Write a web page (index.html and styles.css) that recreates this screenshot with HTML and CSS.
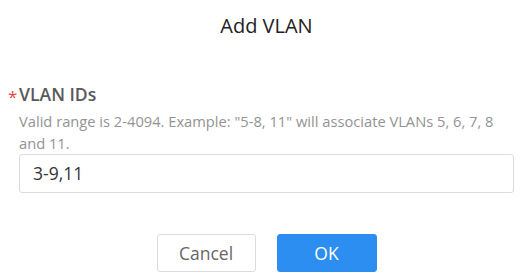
FILE: index.html
```html
<!DOCTYPE html>
<html>
<head>
<meta charset="utf-8">
<link rel="stylesheet" href="styles.css">
</head>
<body>
<div class="dialog">
  <div class="title">Add VLAN</div>
  <div class="field">
    <div class="label"><span class="req">*</span>VLAN IDs</div>
    <div class="help">Valid range is 2-4094. Example: "5-8, 11" will associate VLANs 5, 6, 7, 8 and 11.</div>
    <div class="input">3-9,11</div>
  </div>
  <div class="actions">
    <button class="btn btn-cancel">Cancel</button>
    <button class="btn btn-ok">OK</button>
  </div>
</div>
</body>
</html>
```
FILE: styles.css
```css
html, body {
  margin: 0;
  padding: 0;
  background: #fff;
}
.dialog {
  width: 522px;
  height: 276px;
  box-sizing: border-box;
  padding: 13px 8px 0 19px;
  font-family: "Open Sans", sans-serif;
}
.title {
  text-align: center;
  font-size: 20px;
  line-height: 26px;
  color: #222;
}
.field {
  margin-top: 44px;
}
.label {
  position: relative;
  font-size: 17.6px;
  font-weight: 600;
  color: #595959;
  line-height: 22px;
}
.req {
  position: absolute;
  left: -11px;
  top: 5px;
  color: #f04444;
  font-size: 17px;
  line-height: 17px;
  font-weight: 400;
}
.help {
  margin-top: 5px;
  font-size: 14.7px;
  line-height: 22px;
  color: #939393;
}
.input {
  height: 39px;
  box-sizing: border-box;
  border: 1px solid #dcdcdc;
  border-radius: 3px;
  padding: 0 13px;
  font-size: 17.5px;
  line-height: 37px;
  color: #333;
}
.actions {
  display: flex;
  justify-content: center;
  gap: 21px;
  margin-top: 41px;
}
.btn {
  height: 38px;
  width: 99px;
  border-radius: 3px;
  font-family: "Open Sans", sans-serif;
  font-size: 17.5px;
  cursor: pointer;
  padding: 0;
}
.btn-cancel {
  background: #fff;
  border: 1px solid #dcdcdc;
  color: #666;
}
.btn-ok {
  width: 100px;
  background: #2b8ef0;
  border: 1px solid #2b8ef0;
  color: #fff;
}
```
